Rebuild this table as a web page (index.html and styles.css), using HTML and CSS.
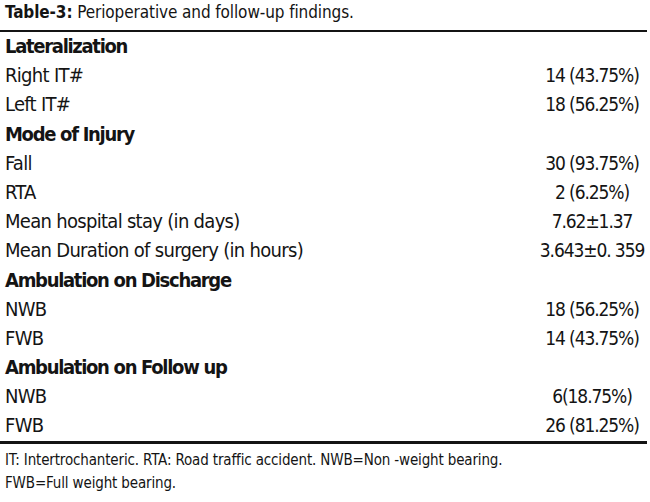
FILE: index.html
```html
<!DOCTYPE html>
<html lang="en">
<head>
<meta charset="utf-8">
<title>Table-3</title>
<link rel="stylesheet" href="styles.css">
</head>
<body>
<div class="page">
  <div class="caption"><b>Table-3:</b> Perioperative and follow-up findings.</div>
  <div class="table">
    <div class="row head"><span class="label">Lateralization</span><span class="value"></span></div>
    <div class="row"><span class="label">Right IT#</span><span class="value">14 (43.75%)</span></div>
    <div class="row"><span class="label">Left IT#</span><span class="value">18 (56.25%)</span></div>
    <div class="row head"><span class="label">Mode of Injury</span><span class="value"></span></div>
    <div class="row"><span class="label">Fall</span><span class="value">30 (93.75%)</span></div>
    <div class="row"><span class="label">RTA</span><span class="value">2 (6.25%)</span></div>
    <div class="row"><span class="label">Mean hospital stay (in days)</span><span class="value">7.62±1.37</span></div>
    <div class="row"><span class="label">Mean Duration of surgery (in hours)</span><span class="value">3.643±0. 359</span></div>
    <div class="row head"><span class="label">Ambulation on Discharge</span><span class="value"></span></div>
    <div class="row"><span class="label">NWB</span><span class="value">18 (56.25%)</span></div>
    <div class="row"><span class="label">FWB</span><span class="value">14 (43.75%)</span></div>
    <div class="row head"><span class="label">Ambulation on Follow up</span><span class="value"></span></div>
    <div class="row"><span class="label">NWB</span><span class="value">6(18.75%)</span></div>
    <div class="row"><span class="label">FWB</span><span class="value">26 (81.25%)</span></div>
  </div>
  <div class="note">
    <p>IT: Intertrochanteric. RTA: Road traffic accident. NWB=Non -weight bearing.</p>
    <p>FWB=Full weight bearing.</p>
  </div>
</div>
</body>
</html>
```
FILE: styles.css
```css
html, body {
  margin: 0;
  padding: 0;
  background: #ffffff;
}
body {
  font-family: "DejaVu Sans Condensed", "DejaVu Sans", sans-serif;
  font-stretch: semi-condensed;
  color: #141414;
}
.page {
  width: 647px;
}
.caption {
  font-size: 17px;
  line-height: 24px;
  padding-left: 5px;
  margin-bottom: 6px;
  letter-spacing: -0.1px;
  white-space: nowrap;
}
.caption b {
  font-weight: bold;
}
.table {
  border-top: 2px solid #141414;
  border-bottom: 3px solid #141414;
}
.row {
  display: flex;
  height: 29.2px;
  align-items: center;
  font-size: 20px;
  line-height: 29.2px;
  letter-spacing: -0.7px;
  white-space: nowrap;
}
.label {
  flex: 1;
  padding-left: 5px;
}
.value {
  width: 110px;
  text-align: center;
  font-size: 19px;
  letter-spacing: -1.1px;
}
.row.head .label {
  font-weight: bold;
  letter-spacing: -1.3px;
}
.note {
  padding-top: 5px;
  padding-left: 5px;
  font-size: 15px;
  line-height: 23.5px;
  letter-spacing: -0.15px;
  white-space: nowrap;
}
.note p {
  margin: 0;
}
```
